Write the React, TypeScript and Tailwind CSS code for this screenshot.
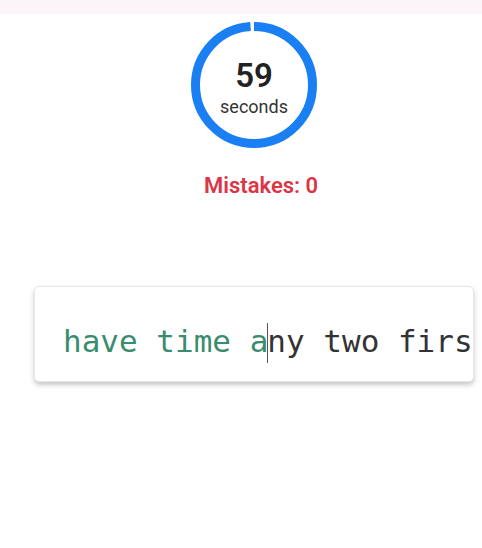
import React from 'react'

const TYPED = 'have time a'
const REST = 'ny two first words'

function Timer({ seconds, total }: { seconds: number; total: number }) {
  const r = 58.5
  const c = 2 * Math.PI * r
  // leave a thin slice open at the top, just left of 12 o'clock
  const len = Math.min((seconds / total) * c + 2, c - 4)
  return (
    <div className="relative w-[126px] h-[126px]">
      <svg width="126" height="126" viewBox="0 0 126 126" className="absolute inset-0">
        <circle
          cx="63"
          cy="63"
          r={r}
          fill="none"
          stroke="#1a7ff2"
          strokeWidth="9"
          strokeDasharray={`${len} ${c}`}
          transform="rotate(-90 63 63)"
        />
      </svg>
      <div className="absolute inset-0 flex flex-col items-center justify-center pt-[4px]">
        <span className="text-[33px] font-semibold leading-none text-[#222]">{seconds}</span>
        <span className="text-[18px] leading-none text-[#333] mt-[6px]">seconds</span>
      </div>
    </div>
  )
}

export default function App() {
  return (
    <div className="w-[482px] h-[548px] bg-white font-['Roboto',sans-serif]">
      <div className="h-[14px] bg-[#fcf4f8]" />
      <div className="flex mt-[8px] pl-[191px]">
        <Timer seconds={59} total={60} />
      </div>
      <p className="mt-[25px] pl-[204px] text-[22px] font-semibold text-[#dc3545] leading-[26px]">
        Mistakes: 0
      </p>
      <div className="mt-[87px] ml-[34px] w-[440px] h-[96px] rounded-[5px] bg-white border border-[#e6e6e6] shadow-[0_3px_5px_rgba(0,0,0,0.22)] overflow-hidden flex items-center">
        <div className="pl-[28px] pt-[18px] whitespace-nowrap font-['DejaVu_Sans_Mono',monospace] text-[31px] leading-none">
          <span className="text-[#3a8c6e]">{TYPED}</span>
          <span className="inline-block w-px h-[40px] bg-[#555] align-middle -mx-px" />
          <span className="text-[#333]">{REST}</span>
        </div>
      </div>
    </div>
  )
}
